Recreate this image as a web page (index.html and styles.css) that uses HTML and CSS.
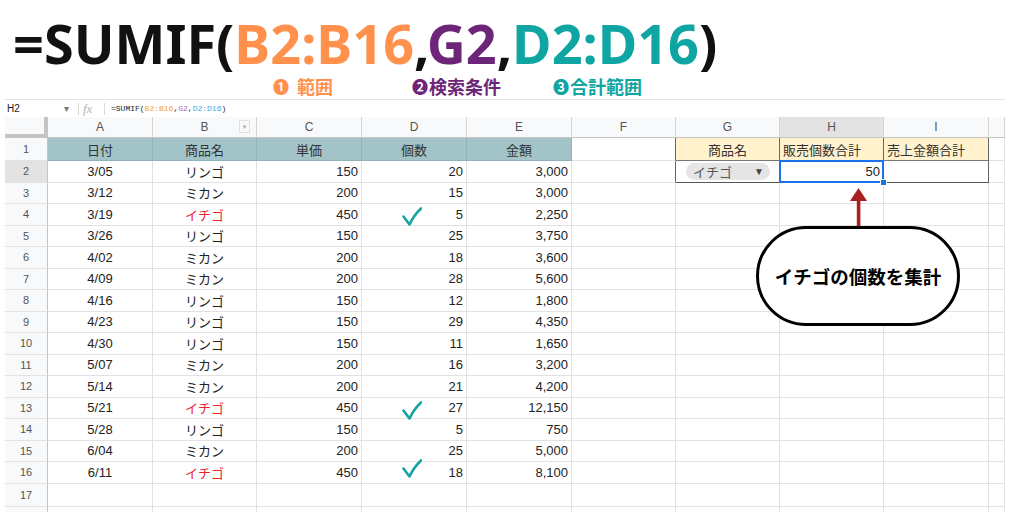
FILE: index.html
```html
<!DOCTYPE html>
<html lang="ja">
<head>
<meta charset="utf-8">
<title>SUMIF</title>
<link rel="stylesheet" href="styles.css">
</head>
<body>
<header class="hero">
  <div class="big">=SUMIF(<span class="or">B2:B16</span>,<span class="pu">G2</span>,<span class="te">D2:D16</span>)</div>
  <div class="notes">
    <span class="note or n1"><span class="num sp">❶</span>範囲</span>
    <span class="note pu n2"><span class="num">❷</span>検索条件</span>
    <span class="note te"><span class="num">❸</span>合計範囲</span>
  </div>
</header>

<div class="sheet">
  <div class="fbar">
    <span class="nm">H2</span>
    <span class="dd">▾</span>
    <span class="sep"></span>
    <span class="fx">fx</span>
    <span class="sep sep2"></span>
    <span class="fml">=SUMIF(<span class="f-or">B2:B16</span>,<span class="f-pu">G2</span>,<span class="f-bl">D2:D16</span>)</span>
  </div>

  <div class="row colhead">
    <div class="c corner"></div>
    <div class="c ch">A</div>
    <div class="c ch chb">B<span class="filt">▼</span></div>
    <div class="c ch">C</div>
    <div class="c ch">D</div>
    <div class="c ch">E</div>
    <div class="c ch">F</div>
    <div class="c ch">G</div>
    <div class="c ch sel">H</div>
    <div class="c ch">I</div>
    <div class="c ch"></div>
  </div>

  <div class="row r1">
    <div class="c rn">1</div>
    <div class="c m hd">日付</div>
    <div class="c m hd">商品名</div>
    <div class="c m hd">単価</div>
    <div class="c m hd">個数</div>
    <div class="c m hd">金額</div>
    <div class="c fb"></div>
    <div class="c m yl">商品名</div>
    <div class="c m yl yh">販売個数合計</div>
    <div class="c m yl yh">売上金額合計</div>
    <div class="c"></div>
  </div>

  <div class="row">
    <div class="c rn rsel">2</div>
    <div class="c m">3/05</div><div class="c m">リンゴ</div><div class="c n">150</div><div class="c n">20</div><div class="c n">3,000</div>
    <div class="c fb"></div>
    <div class="c g2 bx"><span class="chip"><span>イチゴ</span><span class="tri">▼</span></span></div>
    <div class="c n bx h2">50</div>
    <div class="c bx"></div>
    <div class="c"></div>
  </div>
  <div class="row">
    <div class="c rn">3</div>
    <div class="c m">3/12</div><div class="c m">ミカン</div><div class="c n">200</div><div class="c n">15</div><div class="c n">3,000</div>
    <div class="c"></div><div class="c"></div><div class="c"></div><div class="c"></div><div class="c"></div>
  </div>
  <div class="row">
    <div class="c rn">4</div>
    <div class="c m">3/19</div><div class="c m red">イチゴ</div><div class="c n">450</div><div class="c n">5</div><div class="c n">2,250</div>
    <div class="c"></div><div class="c"></div><div class="c"></div><div class="c"></div><div class="c"></div>
  </div>
  <div class="row">
    <div class="c rn">5</div>
    <div class="c m">3/26</div><div class="c m">リンゴ</div><div class="c n">150</div><div class="c n">25</div><div class="c n">3,750</div>
    <div class="c"></div><div class="c"></div><div class="c"></div><div class="c"></div><div class="c"></div>
  </div>
  <div class="row">
    <div class="c rn">6</div>
    <div class="c m">4/02</div><div class="c m">ミカン</div><div class="c n">200</div><div class="c n">18</div><div class="c n">3,600</div>
    <div class="c"></div><div class="c"></div><div class="c"></div><div class="c"></div><div class="c"></div>
  </div>
  <div class="row">
    <div class="c rn">7</div>
    <div class="c m">4/09</div><div class="c m">ミカン</div><div class="c n">200</div><div class="c n">28</div><div class="c n">5,600</div>
    <div class="c"></div><div class="c"></div><div class="c"></div><div class="c"></div><div class="c"></div>
  </div>
  <div class="row">
    <div class="c rn">8</div>
    <div class="c m">4/16</div><div class="c m">リンゴ</div><div class="c n">150</div><div class="c n">12</div><div class="c n">1,800</div>
    <div class="c"></div><div class="c"></div><div class="c"></div><div class="c"></div><div class="c"></div>
  </div>
  <div class="row">
    <div class="c rn">9</div>
    <div class="c m">4/23</div><div class="c m">リンゴ</div><div class="c n">150</div><div class="c n">29</div><div class="c n">4,350</div>
    <div class="c"></div><div class="c"></div><div class="c"></div><div class="c"></div><div class="c"></div>
  </div>
  <div class="row">
    <div class="c rn">10</div>
    <div class="c m">4/30</div><div class="c m">リンゴ</div><div class="c n">150</div><div class="c n">11</div><div class="c n">1,650</div>
    <div class="c"></div><div class="c"></div><div class="c"></div><div class="c"></div><div class="c"></div>
  </div>
  <div class="row">
    <div class="c rn">11</div>
    <div class="c m">5/07</div><div class="c m">ミカン</div><div class="c n">200</div><div class="c n">16</div><div class="c n">3,200</div>
    <div class="c"></div><div class="c"></div><div class="c"></div><div class="c"></div><div class="c"></div>
  </div>
  <div class="row">
    <div class="c rn">12</div>
    <div class="c m">5/14</div><div class="c m">ミカン</div><div class="c n">200</div><div class="c n">21</div><div class="c n">4,200</div>
    <div class="c"></div><div class="c"></div><div class="c"></div><div class="c"></div><div class="c"></div>
  </div>
  <div class="row">
    <div class="c rn">13</div>
    <div class="c m">5/21</div><div class="c m red">イチゴ</div><div class="c n">450</div><div class="c n">27</div><div class="c n">12,150</div>
    <div class="c"></div><div class="c"></div><div class="c"></div><div class="c"></div><div class="c"></div>
  </div>
  <div class="row">
    <div class="c rn">14</div>
    <div class="c m">5/28</div><div class="c m">リンゴ</div><div class="c n">150</div><div class="c n">5</div><div class="c n">750</div>
    <div class="c"></div><div class="c"></div><div class="c"></div><div class="c"></div><div class="c"></div>
  </div>
  <div class="row">
    <div class="c rn">15</div>
    <div class="c m">6/04</div><div class="c m">ミカン</div><div class="c n">200</div><div class="c n">25</div><div class="c n">5,000</div>
    <div class="c"></div><div class="c"></div><div class="c"></div><div class="c"></div><div class="c"></div>
  </div>
  <div class="row">
    <div class="c rn">16</div>
    <div class="c m">6/11</div><div class="c m red">イチゴ</div><div class="c n">450</div><div class="c n">18</div><div class="c n">8,100</div>
    <div class="c"></div><div class="c"></div><div class="c"></div><div class="c"></div><div class="c"></div>
  </div>
  <div class="row r17">
    <div class="c rn">17</div>
    <div class="c"></div><div class="c"></div><div class="c"></div><div class="c"></div><div class="c"></div>
    <div class="c"></div><div class="c"></div><div class="c"></div><div class="c"></div><div class="c"></div>
  </div>
  <div class="row r18">
    <div class="c rn"></div>
    <div class="c"></div><div class="c"></div><div class="c"></div><div class="c"></div><div class="c"></div>
    <div class="c"></div><div class="c"></div><div class="c"></div><div class="c"></div><div class="c"></div>
  </div>

  <svg class="check ck1" viewBox="0 0 20 19" width="20" height="19"><path d="M1.5 9.5 L7.5 17.5 Q12 8 19 1.5" fill="none" stroke="#17a3a3" stroke-width="2.6" stroke-linecap="round" stroke-linejoin="round"/></svg>
  <svg class="check ck2" viewBox="0 0 20 19" width="20" height="19"><path d="M1.5 9.5 L7.5 17.5 Q12 8 19 1.5" fill="none" stroke="#17a3a3" stroke-width="2.6" stroke-linecap="round" stroke-linejoin="round"/></svg>
  <svg class="check ck3" viewBox="0 0 20 19" width="20" height="19"><path d="M1.5 9.5 L7.5 17.5 Q12 8 19 1.5" fill="none" stroke="#17a3a3" stroke-width="2.6" stroke-linecap="round" stroke-linejoin="round"/></svg>

  <svg class="arrow" viewBox="0 0 17 38" width="17" height="38"><polygon points="8.5,0 17,13 0,13" fill="#a8201f"/><rect x="6.8" y="12" width="3.6" height="26" fill="#a8201f"/></svg>

  <div class="bubble">イチゴの個数を集計</div>
</div>
</body>
</html>
```

FILE: styles.css
```css
html, body {
  margin: 0;
  padding: 0;
  background: #ffffff;
  overflow: hidden;
}

body {
  width: 1016px;
  height: 512px;
  font-family: "Liberation Sans", Arial, "Noto Sans CJK JP", sans-serif;
}

/* ===== Title ===== */
.hero {
  height: 99px;
  box-sizing: border-box;
  padding: 16px 0 0 13px;
}

.big {
  font-family: "Noto Sans", "DejaVu Sans", sans-serif;
  font-weight: 700;
  font-size: 54px;
  line-height: 54px;
  height: 54px;
  color: #111111;
  white-space: nowrap;
}

.or { color: #ff914d; }
.pu { color: #6c2579; }
.te { color: #0ea5a3; }

.notes {
  display: flex;
  margin: 6px 0 0 260px;
  height: 20px;
  align-items: center;
}

.note {
  font-family: "Noto Sans CJK JP", sans-serif;
  font-weight: 700;
  font-size: 18px;
  line-height: 20px;
  white-space: nowrap;
  display: flex;
  align-items: center;
}

.note .num {
  font-family: "Noto Sans CJK JP", "DejaVu Sans", sans-serif;
  font-size: 16px;
  line-height: 20px;
  margin-right: 1px;
}

.note .num.sp { margin-right: 8px; }

.n1 { width: 139px; }
.n2 { width: 141px; }

/* ===== Sheet ===== */
.sheet {
  position: relative;
  margin-left: 5px;
  width: 1000px;
}

.fbar {
  height: 18px;
  box-sizing: border-box;
  border-top: 1px solid #e3e3e3;
  display: flex;
  align-items: center;
  font-size: 10px;
  color: #222;
}

.nm {
  width: 54px;
  padding-left: 2px;
  font-size: 10px;
}

.dd {
  width: 10px;
  text-align: center;
  color: #777;
  font-size: 10px;
}

.sep {
  width: 1px;
  height: 12px;
  background: #dadada;
  margin-left: 7px;
}

.sep2 { margin-left: 9px; }

.fx {
  margin-left: 4px;
  width: 12px;
  font-family: "Liberation Serif", serif;
  font-style: italic;
  font-size: 13px;
  color: #b5b5b5;
  line-height: 12px;
}

.fml {
  margin-left: 6px;
  font-family: "Liberation Mono", monospace;
  font-size: 8px;
  color: #222;
}

.f-or { color: #f4a13a; }
.f-pu { color: #a86bc8; }
.f-bl { color: #3fa9d6; }

.row {
  display: grid;
  grid-template-columns: 43px 105px 104px 105px 105px 105px 104px 104px 104px 105px 16px;
  height: 21.5px;
}

.c {
  box-sizing: border-box;
  border-right: 1px solid #e2e2e2;
  border-bottom: 1px solid #e2e2e2;
  display: flex;
  align-items: center;
  padding: 0 3px;
  font-size: 13px;
  color: #222;
  white-space: nowrap;
  overflow: hidden;
  position: relative;
}

.m { justify-content: center; }
.n { justify-content: flex-end; }

.colhead { height: 21px; }

.ch {
  background: #f8f9fa;
  justify-content: center;
  font-size: 12px;
  color: #555;
  border-right-color: #d4d4d4;
  border-bottom-color: #c4c4c4;
  overflow: visible;
}

.ch.sel { background: #e3e3e3; }

.corner {
  background: #f8f9fa;
  border-right: 4px solid #c4c4c4;
  border-bottom: 4px solid #c4c4c4;
}

.filt {
  position: absolute;
  right: 6px;
  top: 3px;
  width: 11px;
  height: 13px;
  box-sizing: border-box;
  border: 1px solid #e0e0e0;
  font-size: 6px;
  color: #aaa;
  display: flex;
  align-items: center;
  justify-content: center;
}

.rn {
  background: #f8f9fa;
  justify-content: center;
  font-size: 11px;
  color: #555;
  border-right-color: #c4c4c4;
}

.rn.rsel { background: #e3e3e3; }

.r1 { height: 23px; }
.r17 { height: 23px; }
.r18 { height: 12px; }

.hd {
  background: #a2c4c9;
  color: #333;
  border-right-color: #8fb3b8;
  border-bottom-color: #8fb3b8;
}

.fb { border-right-color: #666; }

.yl {
  background: #fff2cc;
  color: #333;
  border-right-color: #666;
  border-bottom-color: #777;
}

.yh { justify-content: flex-start; }

.bx {
  border-right-color: #666;
  border-bottom-color: #555;
}

.red { color: #e8262d; }

.chip {
  margin-left: 7px;
  width: 84px;
  height: 17px;
  box-sizing: border-box;
  padding: 0 6px 0 7px;
  border-radius: 9px;
  background: #e5e5e5;
  display: flex;
  align-items: center;
  justify-content: space-between;
  color: #555;
  font-size: 13px;
}

.chip .tri {
  font-size: 10px;
  color: #444;
}

.h2 { overflow: visible; }

.h2::after {
  content: "";
  position: absolute;
  left: -1px;
  top: -1px;
  right: -1px;
  bottom: -1px;
  border: 2px solid #1a73e8;
}

.h2::before {
  content: "";
  position: absolute;
  right: -4px;
  bottom: -4px;
  width: 5px;
  height: 5px;
  background: #1a73e8;
  border: 1px solid #fff;
  z-index: 2;
}

/* ===== Overlays ===== */
.check {
  position: absolute;
  left: 397px;
}

.ck1 { top: 108px; }
.ck2 { top: 302px; }
.ck3 { top: 360px; }

.arrow {
  position: absolute;
  left: 845px;
  top: 89px;
}

.bubble {
  position: absolute;
  left: 751px;
  top: 127px;
  width: 204px;
  height: 100px;
  box-sizing: border-box;
  border: 3px solid #000;
  border-radius: 50px;
  background: #fff;
  display: flex;
  align-items: center;
  justify-content: center;
  font-family: "Noto Sans CJK JP", sans-serif;
  font-weight: 700;
  font-size: 18.5px;
  color: #000;
}
```
